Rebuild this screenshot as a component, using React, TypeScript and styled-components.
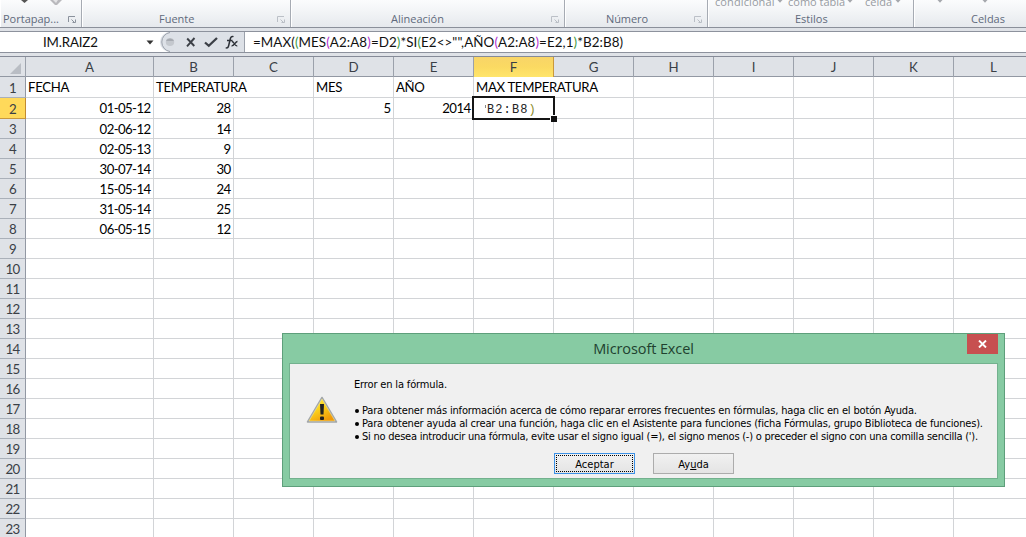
import React from 'react';
import styled, { createGlobalStyle, css } from 'styled-components';

const Global = createGlobalStyle`
  * { box-sizing: border-box; }
  body { margin: 0; overflow: hidden; background: #fff; }
`;

const calibri = css`font-family: Lato, 'Liberation Sans', sans-serif;`;
const segoe = css`font-family: 'Open Sans', 'Noto Sans', sans-serif;`;
const tahoma = css`font-family: 'DejaVu Sans Condensed', 'DejaVu Sans', sans-serif; font-stretch: condensed;`;

const Window = styled.div`
  position: relative;
  width: 1026px;
  height: 537px;
  overflow: hidden;
  display: flex;
  flex-direction: column;
  background: #dfe2e7;
`;

/* ---------- ribbon ---------- */
const Ribbon = styled.div`
  display: flex;
  flex: none;
  height: 28px;
  background: linear-gradient(#fbfcfd, #f2f4f6 45%, #e6e9ed);
  border-bottom: 1px solid #8b909a;
`;
const Group = styled.div<{ $w: number }>`
  flex: none;
  position: relative;
  width: ${p => p.$w}px;
  height: 27px;
  border-right: 1px solid #a6abb3;
  box-shadow: inset 1px 0 #fff;
`;
const GroupLabel = styled.div<{ $left: number; $ls?: number }>`
  ${segoe}
  padding: 11px 0 0 ${p => p.$left}px;
  font-size: 11px;
  line-height: 16px;
  letter-spacing: ${p => p.$ls ?? 0}px;
  color: #5f6a7c;
  white-space: nowrap;
`;
const Launcher = styled.svg<{ $faint?: boolean }>`
  position: absolute;
  right: 4px;
  top: 15px;
  opacity: ${p => (p.$faint ? 0.5 : 1)};
`;
const Clipped = styled.div<{ $left: number; $ls?: number }>`
  ${segoe}
  position: absolute;
  left: ${p => p.$left}px;
  top: -6px;
  font-size: 11px;
  line-height: 16px;
  letter-spacing: ${p => p.$ls ?? 0}px;
  color: #979ba2;
  white-space: nowrap;
`;
const Glyph = styled.svg<{ $left: number }>`
  position: absolute;
  top: 0;
  left: ${p => p.$left}px;
`;

/* ---------- formula bar ---------- */
const FormulaBar = styled.div`
  flex: none;
  display: flex;
  height: 22px;
  margin: 3px 0;
  background: #fff;
  border-top: 1px solid #8d929d;
  border-bottom: 1px solid #8d929d;
`;
const NameBox = styled.div`
  ${calibri}
  width: 160px;
  padding: 0 6px 0 43px;
  display: flex;
  align-items: center;
  justify-content: space-between;
  font-size: 13.3px;
  letter-spacing: -0.15px;
  line-height: 20px;
  color: #111;
`;
const Buttons = styled.svg`
  flex: none;
`;
const Formula = styled.div`
  ${calibri}
  padding-left: 8px;
  font-size: 13.4px;
  line-height: 21px;
  letter-spacing: 0.07px;
  color: #111;
  white-space: pre;
`;
const Paren = styled.span<{ $c: string }>`
  color: ${p => p.$c};
`;

/* ---------- sheet ---------- */
const columns = '26px 128px repeat(11, 80px)';
const HeaderRow = styled.div`
  flex: none;
  display: grid;
  grid-template-columns: ${columns};
  height: 21px;
  border-top: 1px solid #858a97;
  border-bottom: 1px solid #9298a3;
  background: #dfe2e7;
`;
const HeadCell = styled.div<{ $active?: boolean }>`
  ${calibri}
  display: flex;
  align-items: center;
  justify-content: center;
  font-size: 13.3px;
  line-height: 19px;
  padding-top: 1px;
  color: #3a3f46;
  border-right: 1px solid #9ba1ab;
  ${p => p.$active && css`
    background: linear-gradient(#f8d568, #fbda62 50%, #ffe56b);
    border-color: #c9983c;
    box-shadow: 0 1px #c28a30;
  `}
`;
const Row = styled.div<{ $h: number }>`
  flex: none;
  display: grid;
  grid-template-columns: ${columns};
  height: ${p => p.$h}px;
  background: #fff;
`;
const RowHead = styled.div<{ $active?: boolean }>`
  ${calibri}
  display: flex;
  align-items: center;
  justify-content: center;
  padding-top: 1px;
  font-size: 13.3px;
  letter-spacing: -0.6px;
  color: #3a3f46;
  background: ${p => (p.$active ? '#ffd95a' : '#dfe2e7')};
  border-right: 1px solid ${p => (p.$active ? '#c28a30' : '#9298a3')};
  border-bottom: 1px solid ${p => (p.$active ? '#c9983c' : '#aab0b9')};
`;
const Cell = styled.div<{ $right?: boolean; $spill?: boolean }>`
  ${calibri}
  position: relative;
  display: flex;
  align-items: center;
  justify-content: ${p => (p.$right ? 'flex-end' : 'flex-start')};
  padding: ${p => (p.$right ? '0 2.5px 0 2px' : '0 2px')};
  font-size: 13.2px;
  letter-spacing: ${p => (p.$right ? -0.6 : -0.33)}px;
  white-space: nowrap;
  color: #000;
  border-right: 1px solid ${p => (p.$spill ? 'transparent' : '#d2d4d7')};
  border-bottom: 1px solid #d2d4d7;
`;
const EditCell = styled.div`
  position: absolute;
  left: -2px;
  top: -2px;
  width: 83px;
  height: 24px;
  z-index: 1;
  padding-left: 11px;
  border: 2px solid #151515;
  background: #fff;
  font: 12px/25px 'Liberation Mono', monospace;
  letter-spacing: 1.1px;
  color: #222;
  &::after {
    content: '';
    position: absolute;
    right: -4px;
    bottom: -4px;
    width: 6px;
    height: 6px;
    background: #111;
    border: solid #fff;
    border-width: 1px 0 0 1px;
  }
`;
const Tick = styled.span`
  display: inline-block;
  width: 1px;
  height: 3px;
  margin: 0 1px 5px 0;
  vertical-align: baseline;
  background: #888;
`;

/* ---------- dialog ---------- */
const Dialog = styled.div`
  position: absolute;
  left: 282px;
  top: 333px;
  width: 723px;
  height: 154px;
  z-index: 2;
  display: flex;
  flex-direction: column;
  padding: 0 6px 7px;
  background: #87cba3;
  border: 1px solid #5e9f7b;
`;
const TitleBar = styled.div`
  ${segoe}
  position: relative;
  flex: none;
  height: 29px;
  padding-top: 1px;
  text-align: center;
  font-size: 14.5px;
  line-height: 28px;
  letter-spacing: -0.1px;
  color: #21412f;
`;
const Close = styled.button`
  position: absolute;
  right: 0;
  top: 0;
  width: 31px;
  height: 20px;
  padding: 0;
  border: 0;
  display: flex;
  align-items: center;
  justify-content: center;
  background: #c75050;
`;
const Body = styled.div`
  flex: 1;
  display: flex;
  flex-direction: column;
  border: 1px solid #73b18e;
  background: #f0f0f0;
`;
const Content = styled.div`
  display: flex;
  height: 89px;
`;
const Warning = styled.svg`
  flex: none;
  margin: 32px 16px 0 16px;
`;
const Message = styled.div`
  ${tahoma}
  padding-top: 14px;
  font-size: 11px;
  line-height: 13px;
  color: #000;
`;
const Line = styled.div<{ $ls: number; $gap?: boolean }>`
  display: flex;
  align-items: center;
  height: 13px;
  margin-bottom: ${p => (p.$gap ? 13 : 0)}px;
  letter-spacing: ${p => p.$ls}px;
  white-space: nowrap;
`;
const Bullet = styled.span`
  width: 4px;
  height: 4px;
  margin: 1px 3px 0 1px;
  border-radius: 50%;
  background: #000;
`;
const Actions = styled.div`
  display: flex;
  gap: 18px;
  padding-left: 264px;
`;
const Button = styled.button<{ $focus?: boolean }>`
  ${tahoma}
  width: 81px;
  height: 21px;
  padding: 1px;
  font-size: 11px;
  line-height: 17px;
  color: #000;
  background: linear-gradient(#f1f1f1, #e4e4e4);
  border: 1px solid ${p => (p.$focus ? '#3c91e6' : '#acacac')};
`;
const Face = styled.span<{ $focus?: boolean }>`
  display: block;
  height: 17px;
  border: 1px dotted ${p => (p.$focus ? '#000' : 'transparent')};
`;

const LauncherIcon = ({ faint }: { faint?: boolean }) => (
  <Launcher $faint={faint} width="9" height="9" viewBox="0 0 9 9" fill="none" stroke="#8a919c">
    <path d="M0.5 7V1.5H7" />
    <path d="M3.5 4.5L7 8M7.5 4.5V7.5H4.5" />
  </Launcher>
);

const Arrow = ({ left }: { left: number }) => (
  <Glyph $left={left} width="6" height="4" viewBox="0 0 6 4"><path d="M0.5 0H5.5L3 2.8Z" fill="#a5a8ad" /></Glyph>
);

const data: Record<number, Record<string, string>> = {
  1: { A: 'FECHA', B: 'TEMPERATURA', D: 'MES', E: 'AÑO', F: 'MAX TEMPERATURA' },
  2: { A: '01-05-12', B: '28', D: '5', E: '2014' },
  3: { A: '02-06-12', B: '14' },
  4: { A: '02-05-13', B: '9' },
  5: { A: '30-07-14', B: '30' },
  6: { A: '15-05-14', B: '24' },
  7: { A: '31-05-14', B: '25' },
  8: { A: '06-05-15', B: '12' },
};
const letters = 'ABCDEFGHIJKL'.split('');
const rows = Array.from({ length: 23 }, (_, i) => i + 1);
const green = '#3f9a3f';
const purple = '#b02fd0';

export default function App() {
  return (
    <Window>
      <Global />
      <Ribbon>
        <Group $w={82}>
          <Glyph $left={18} width="50" height="7" viewBox="0 0 50 7">
            <path d="M3 0H10L6.5 3Z" fill="#555" />
            <path d="M32 0H44L39 5L37 5Z" fill="#b9b9bd" />
            <path d="M35 0H40L38 3Z" fill="#e4e4e6" />
          </Glyph>
          <GroupLabel $left={3}>Portapap...</GroupLabel>
          <LauncherIcon />
        </Group>
        <Group $w={209}><GroupLabel $left={77}>Fuente</GroupLabel><LauncherIcon faint /></Group>
        <Group $w={274}><GroupLabel $left={100}>Alineación</GroupLabel><LauncherIcon faint /></Group>
        <Group $w={143}><GroupLabel $left={41} $ls={-0.1}>Número</GroupLabel><LauncherIcon faint /></Group>
        <Group $w={206}>
          <Clipped $left={7} $ls={0.1}>condicional</Clipped><Arrow left={69} />
          <Clipped $left={80}>como tabla</Clipped><Arrow left={139} />
          <Clipped $left={157}>celda</Clipped><Arrow left={187} />
          <GroupLabel $left={87}>Estilos</GroupLabel>
        </Group>
        <Group $w={130}><Arrow left={23} /><Arrow left={68} /><GroupLabel $left={57}>Celdas</GroupLabel></Group>
      </Ribbon>

      <FormulaBar>
        <NameBox>
          IM.RAIZ2
          <svg width="8" height="5" viewBox="0 0 8 5"><path d="M0.500 0.500H7.500L4 4.500Z" fill="#333" /></svg>
        </NameBox>
        <Buttons width="85" height="20" viewBox="0 0 85 20">
          <path d="M84 0H10A10 10 0 0 0 10 20H84Z" fill="#dde1e7" />
          <path d="M10 0.500A9.600 9.600 0 0 0 10 19.500" fill="none" stroke="#9ba1ab" />
          <path d="M84.500 0V20" stroke="#9ba1ab" />
          <ellipse cx="10" cy="10" rx="4.200" ry="4" fill="#c4c8ce" />
          <path d="M6 9A4.200 3.600 0 0 1 14 9Z" fill="#a7abb2" />
          <path d="M27.200 6.500L34.300 14M34.500 6L27 14.300" stroke="#3c4047" strokeWidth="1.900" />
          <path d="M45 10.500L48.800 13.800L57 6" fill="none" stroke="#3c4047" strokeWidth="2.300" />
          <path d="M73.500 4.700C71.500 3.700 70.500 5.500 70 8L68.700 13.500C68.300 15.500 67.300 16.500 65.700 15.600M67 8.500H72.500" fill="none" stroke="#2d3138" strokeWidth="1.500" />
          <path d="M71.800 9.500C74 9 74.500 14.600 77.300 13.800M77.500 9.500C75.500 9.300 74 14.300 71.500 13.800" fill="none" stroke="#2d3138" strokeWidth="1.300" />
        </Buttons>
        <Formula>
          =MAX(<Paren $c={green}>(</Paren>MES<Paren $c={purple}>(</Paren>A2:A8<Paren $c={purple}>)</Paren>=D2<Paren $c={green}>)</Paren>*SI<Paren $c={green}>(</Paren>E2&lt;&gt;"",AÑO<Paren $c={purple}>(</Paren>A2:A8<Paren $c={purple}>)</Paren>=E2,1<Paren $c={green}>)</Paren>*B2:B8)
        </Formula>
      </FormulaBar>

      <HeaderRow>
        <HeadCell>
          <svg width="25" height="18" viewBox="0 0 25 18"><path d="M21 4V15H10Z" fill="#b9bdc4" /></svg>
        </HeadCell>
        {letters.map(l => <HeadCell key={l} $active={l === 'F'}>{l}</HeadCell>)}
      </HeaderRow>
      {rows.map(n => (
        <Row key={n} $h={n < 3 ? 21 : 20}>
          <RowHead $active={n === 2}>{n}</RowHead>
          {letters.map(l => (
            <Cell key={l} $right={n > 1} $spill={n === 1 && (l === 'B' || l === 'F')}>
              {data[n]?.[l]}
              {n === 2 && l === 'F' && <EditCell><Tick />B2:B8<Paren $c="#8a8a2a">)</Paren></EditCell>}
            </Cell>
          ))}
        </Row>
      ))}

      <Dialog>
        <TitleBar>
          Microsoft Excel
          <Close>
            <svg width="9" height="8" viewBox="0 0 9 8"><path d="M1 0.500L8 7.500M8 0.500L1 7.500" stroke="#fff" strokeWidth="1.900" /></svg>
          </Close>
        </TitleBar>
        <Body>
          <Content>
            <Warning width="32" height="30" viewBox="0 0 32 30">
              <defs>
                <linearGradient id="amber" x1="0" y1="0" x2="0.600" y2="1">
                  <stop offset="0" stopColor="#fff04a" /><stop offset="0.500" stopColor="#fbd21c" /><stop offset="1" stopColor="#f09a08" />
                </linearGradient>
              </defs>
              <path d="M16 1.500L30.500 26H1.500Z" fill="#a3a7a9" stroke="#a3a7a9" strokeWidth="1.500" strokeLinejoin="round" />
              <path d="M16 3L29 25H3Z" fill="url(#amber)" stroke="#f5e9a0" strokeWidth="0.500" />
              <path d="M14 8H18L17.500 18.500H14.500Z" fill="#222" />
              <rect x="14" y="20.500" width="4" height="3.500" rx="1" fill="#222" />
            </Warning>
            <Message>
              <Line $ls={-0.15} $gap>Error en la fórmula.</Line>
              <Line $ls={-0.163}><Bullet />Para obtener más información acerca de cómo reparar errores frecuentes en fórmulas, haga clic en el botón Ayuda.</Line>
              <Line $ls={-0.17}><Bullet />Para obtener ayuda al crear una función, haga clic en el Asistente para funciones (ficha Fórmulas, grupo Biblioteca de funciones).</Line>
              <Line $ls={-0.23}><Bullet />Si no desea introducir una fórmula, evite usar el signo igual (=), el signo menos (-) o preceder el signo con una comilla sencilla (').</Line>
            </Message>
          </Content>
          <Actions>
            <Button $focus><Face $focus>Aceptar</Face></Button>
            <Button><Face>Ay<u>u</u>da</Face></Button>
          </Actions>
        </Body>
      </Dialog>
    </Window>
  );
}
